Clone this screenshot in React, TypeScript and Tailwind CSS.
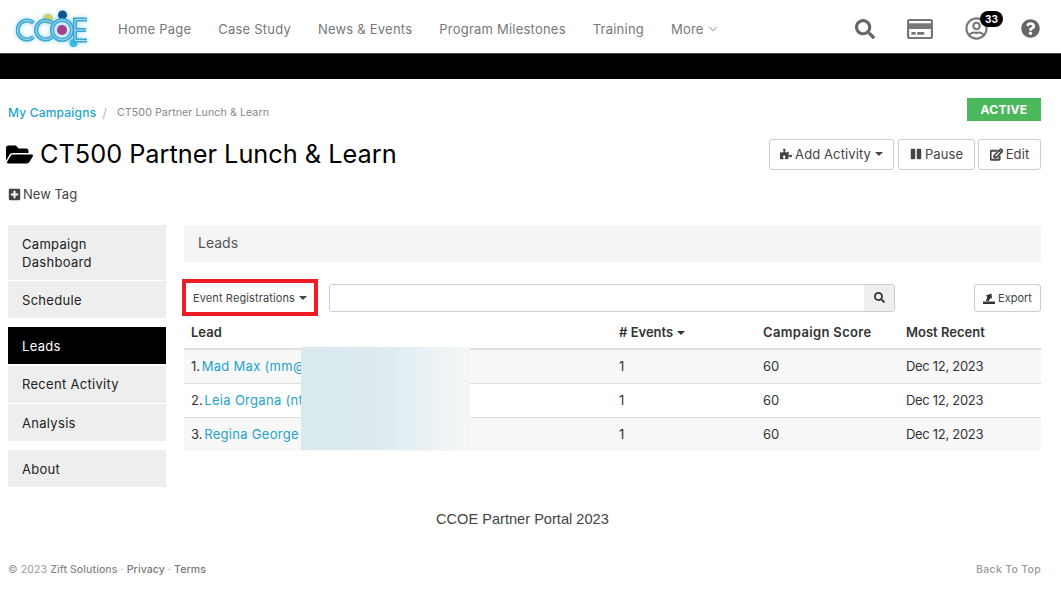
import { ChevronDown } from "lucide-react";
import {
    FaFolderOpen,
    FaPause,
    FaPlusSquare,
    FaPuzzlePiece,
    FaQuestionCircle,
    FaRegCreditCard,
    FaRegEdit,
    FaRegUserCircle,
    FaSearch,
} from "react-icons/fa";

const navLinks = ["Home Page", "Case Study", "News & Events", "Program Milestones", "Training"];

const leads = [
    { name: "Mad Max (mm@", striped: true },
    { name: "Leia Organa (nt", striped: false },
    { name: "Regina George", striped: true },
];

function Logo() {
    const shapes = (
        <>
            <path d="M17.5 14a9.5 9.5 0 1 0 0 14" />
            <path d="M36 14a9.5 9.5 0 1 0 0 14" />
            <circle cx="46" cy="21" r="10" />
            <path d="M71 10.5h-12v21h12M59 21h11" />
        </>
    );
    return (
        <svg width="74" height="40" viewBox="0 0 74 40" className="block drop-shadow-[0_0_2px_#8fd6f2]">
            <circle cx="32" cy="10" r="5" fill="#c3d264" />
            <circle cx="46.5" cy="6" r="4.5" fill="#14548a" />
            <circle cx="57.5" cy="34" r="4" fill="#35bdea" />
            <circle cx="46" cy="21" r="5" fill="#a5408f" />
            <g fill="none" stroke="#3aa5d4" strokeWidth="4">
                {shapes}
            </g>
            <g fill="none" stroke="#c4e8f6" strokeWidth="0.9">
                {shapes}
            </g>
        </svg>
    );
}

function Caret() {
    return <span className="ml-1 inline-block border-x-[4px] border-t-[4px] border-x-transparent border-t-current align-middle" />;
}

function ExportIcon() {
    return (
        <svg width="12" height="12" viewBox="0 0 12 12" className="block" fill="#333333">
            <path d="M0 9.5h12V12H0z" />
            <path d="M3 9l1.2-4.2L2.8 3.6 8.5 1.5 9 7 7.7 5.7 5.6 9z" />
        </svg>
    );
}

function SideItem({ label, active }: { label: string; active?: boolean }) {
    return (
        <a
            className={
                active
                    ? "block bg-black px-[14px] py-[9.5px] tracking-[0.3px] text-white"
                    : "block bg-[#eeeeee] px-[14px] py-[9.5px] tracking-[0.3px] text-[#222222]"
            }
        >
            {label}
        </a>
    );
}

export default function App() {
    return (
        <div className="min-h-[593px] bg-white font-['Inter','Noto_Sans',sans-serif] text-[13px] leading-[18px] text-[#333333]">
            <header className="flex h-[53px] items-center pl-[16px] pr-[21px] pt-[4px]">
                <Logo />
                <nav className="ml-[28px] flex items-center gap-[27px] text-[13px] tracking-[0.22px] text-[#777777]">
                    {navLinks.map((link) => (
                        <a key={link}>{link}</a>
                    ))}
                    <a className="flex items-center gap-[2px]">
                        More <ChevronDown size={14} strokeWidth={1.5} />
                    </a>
                </nav>
                <div className="ml-auto flex items-center text-[#666666]">
                    <FaSearch size={20} />
                    <FaRegCreditCard size={26} className="ml-[32px] text-[#777777]" />
                    <div className="relative ml-[32px]">
                        <FaRegUserCircle size={23} className="text-[#777777]" />
                        <span className="absolute -top-[6px] left-[15px] rounded-full bg-black px-[5px] text-[10px] font-bold leading-[16px] text-white">
                            33
                        </span>
                    </div>
                    <FaQuestionCircle size={19} className="ml-[33px]" />
                </div>
            </header>
            <div className="h-[26px] border-t border-[#444444] bg-black" />

            <div className="pl-[8px] pr-[20px]">
                <div className="flex items-start justify-between pt-[19px]">
                    <div className="flex items-center pt-[6px]">
                        <a className="text-[12px] font-medium tracking-[0.2px] text-[#1fa3cc]">My Campaigns</a>
                        <span className="ml-[6px] mr-[10px] text-[#bbbbbb]">/</span>
                        <span className="text-[10.7px] tracking-[0.05px] text-[#888888]">CT500 Partner Lunch &amp; Learn</span>
                    </div>
                    <span className="flex h-[23px] w-[74px] items-center justify-center bg-[#4cb85c] text-[12px] font-bold tracking-wide text-white">
                        ACTIVE
                    </span>
                </div>

                <div className="mt-[16px] flex items-center justify-between">
                    <h1 className="flex items-center text-[25.3px] leading-[32px] text-black">
                        <FaFolderOpen size={27} className="mr-[7px] -ml-[2px]" />
                        CT500 Partner Lunch &amp; Learn
                    </h1>
                    <div className="flex text-[13px] tracking-[0.1px] text-[#444444]">
                        <button className="flex h-[31px] w-[125px] items-center justify-center rounded-[3px] border border-[#cccccc]">
                            <FaPuzzlePiece size={12} className="mr-[3px]" />
                            Add Activity
                            <Caret />
                        </button>
                        <button className="ml-[4px] flex h-[31px] w-[77px] items-center justify-center rounded-[3px] border border-[#cccccc]">
                            <FaPause size={12} className="mr-[3px]" />
                            Pause
                        </button>
                        <button className="ml-[3px] flex h-[31px] w-[63px] items-center justify-center rounded-[3px] border border-[#cccccc]">
                            <FaRegEdit size={13} className="mr-[3px]" stroke="currentColor" strokeWidth={40} />
                            Edit
                        </button>
                    </div>
                </div>

                <div className="mt-[15px] flex items-center text-[#444444]">
                    <FaPlusSquare size={13} className="mr-[2px]" />
                    New Tag
                </div>

                <div className="mt-[22px] flex gap-[18px]">
                    <aside className="w-[158px] shrink-0">
                        <div className="flex flex-col gap-[1px]">
                            <SideItem label="Campaign Dashboard" />
                            <SideItem label="Schedule" />
                        </div>
                        <div className="mt-[9px] flex flex-col gap-[1.5px]">
                            <SideItem label="Leads" active />
                            <SideItem label="Recent Activity" />
                            <SideItem label="Analysis" />
                        </div>
                        <div className="mt-[9px]">
                            <SideItem label="About" />
                        </div>
                    </aside>

                    <main className="min-w-0 flex-1">
                        <div className="flex h-[37px] items-center bg-[#f5f5f5] px-[14px] pb-[2px] text-[14px] text-[#555555]">Leads</div>

                        <div className="mt-[17px] flex items-center">
                            <button className="-ml-[2px] flex h-[37px] w-[136px] items-center justify-center border-[4px] border-[#ee1c25] text-[11px] tracking-[0.12px] text-[#444444]">
                                Event Registrations
                                <Caret />
                            </button>
                            <div className="ml-[11px] flex h-[28px] w-[566px] overflow-hidden rounded-[3px] border border-[#cccccc]">
                                <div className="flex-1 bg-white" />
                                <div className="flex w-[30px] items-center justify-center bg-[#eeeeee] text-[#333333]">
                                    <FaSearch size={11} />
                                </div>
                            </div>
                            <button className="ml-auto flex h-[28px] w-[67px] items-center justify-center gap-[3px] rounded-[3px] border border-[#cccccc] text-[11px] text-[#444444]">
                                <ExportIcon />
                                Export
                            </button>
                        </div>

                        <div className="relative">
                            <table className="mt-[2px] w-full table-fixed border-collapse">
                                <thead>
                                    <tr className="h-[31px] border-b-2 border-[#dddddd] text-left text-[#333333]">
                                        <th className="w-[428px] pb-[2px] pl-[7px] font-semibold">Lead</th>
                                        <th className="w-[143px] pb-[2px] pl-[7px] font-semibold">
                                            # Events
                                            <Caret />
                                        </th>
                                        <th className="w-[143px] pb-[2px] pl-[8px] font-semibold tracking-[0.35px]">Campaign Score</th>
                                        <th className="pb-[2px] pl-[8px] font-semibold">Most Recent</th>
                                    </tr>
                                </thead>
                                <tbody>
                                    {leads.map((lead, i) => (
                                        <tr
                                            key={lead.name}
                                            className={
                                                (lead.striped ? "bg-[#f8f8f8] " : "") +
                                                (i < leads.length - 1 ? "h-[34px] border-b border-[#dddddd]" : "h-[34px]")
                                            }
                                        >
                                            <td className="whitespace-nowrap pl-[7px]">
                                                {i + 1}. <a className="-ml-[2px] tracking-[0.3px] text-[#1fa3cc]">{lead.name}</a>
                                            </td>
                                            <td className="pl-[7px]">1</td>
                                            <td className="pl-[8px]">60</td>
                                            <td className="pl-[8px] tracking-[-0.3px]">Dec 12, 2023</td>
                                        </tr>
                                    ))}
                                </tbody>
                            </table>
                            <div className="absolute left-[117px] top-[29px] h-[103px] w-[169px] bg-gradient-to-r from-[#dae9ee] via-[#deecf0] to-[#f5f7f7]" />
                        </div>
                    </main>
                </div>

                <p className="mt-[23px] pl-[428px] font-['Liberation_Sans',sans-serif] text-[14.6px] leading-[18px] text-[#444444]">
                    CCOE Partner Portal 2023
                </p>

                <div className="mt-[33px] flex items-center justify-between text-[10.5px] tracking-[0.1px] text-[#999999]">
                    <span>
                        © 2023 <span className="font-medium text-[#888888]">Zift Solutions</span> ·{" "}
                        <span className="font-medium text-[#777777]">Privacy</span> ·{" "}
                        <span className="font-medium text-[#777777]">Terms</span>
                    </span>
                    <span className="font-medium tracking-[0.3px]">Back To Top</span>
                </div>
            </div>
        </div>
    );
}
